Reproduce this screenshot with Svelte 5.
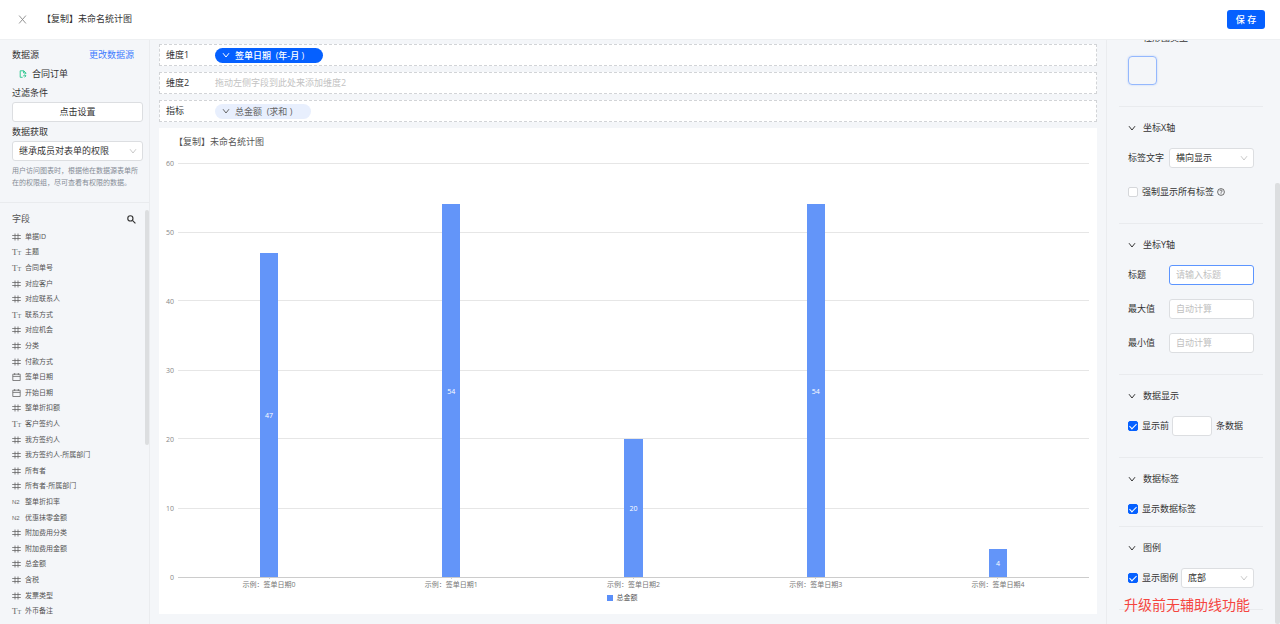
<script>
    let permission = "继承成员对表单的权限";
    let labelDirection = "横向显示";
    let legendPosition = "底部";

    let forceLabels = false;
    let limitRows = true;
    let showLabels = true;
    let showLegend = true;

    let axisTitle = "";
    let axisMax = "";
    let axisMin = "";
    let rowLimit = "";

    const fields = [
        { type: "hash", name: "单据ID" },
        { type: "text", name: "主题" },
        { type: "text", name: "合同单号" },
        { type: "hash", name: "对应客户" },
        { type: "hash", name: "对应联系人" },
        { type: "text", name: "联系方式" },
        { type: "hash", name: "对应机会" },
        { type: "hash", name: "分类" },
        { type: "hash", name: "付款方式" },
        { type: "date", name: "签单日期" },
        { type: "date", name: "开始日期" },
        { type: "hash", name: "整单折扣额" },
        { type: "text", name: "客户签约人" },
        { type: "hash", name: "我方签约人" },
        { type: "hash", name: "我方签约人-所属部门" },
        { type: "hash", name: "所有者" },
        { type: "hash", name: "所有者-所属部门" },
        { type: "number", name: "整单折扣率" },
        { type: "number", name: "优惠抹零金额" },
        { type: "hash", name: "附加费用分类" },
        { type: "hash", name: "附加费用金额" },
        { type: "hash", name: "总金额" },
        { type: "hash", name: "含税" },
        { type: "hash", name: "发票类型" },
        { type: "text", name: "外币备注" },
    ];

    const data = [
        { label: "示例：签单日期0", value: 47 },
        { label: "示例：签单日期1", value: 54 },
        { label: "示例：签单日期2", value: 20 },
        { label: "示例：签单日期3", value: 54 },
        { label: "示例：签单日期4", value: 4 },
    ];

    const max = 60;
    const ticks = [60, 50, 40, 30, 20, 10, 0];

    // everything in the plot is placed in percent so it can stretch
    const y = (v) => (1 - v / max) * 100;
    const x = (i) => ((i + 0.5) / data.length) * 100;
</script>

{#snippet chevron()}
    <svg class="chevron" viewBox="0 0 8 8" aria-hidden="true">
        <path d="M1 2.2 4 6 7 2.2" />
    </svg>
{/snippet}

{#snippet heading(title)}
    <h3>{@render chevron()}{title}</h3>
{/snippet}

<div class="app">
    <header>
        <button class="close" aria-label="关闭">
            <svg viewBox="0 0 8 8"><path d="M1 .5 7 7.5M7 .5 1 7.5" /></svg>
        </button>
        <h1>【复制】未命名统计图</h1>
        <button class="save">保 存</button>
    </header>

    <div class="body">
        <aside class="left">
            <section class="source">
                <div class="row between">
                    <span>数据源</span>
                    <a href="#source">更改数据源</a>
                </div>
                <div class="row form-name">
                    <svg viewBox="0 0 8 8" aria-hidden="true">
                        <path d="M3.6 7.3H1.2V.8H4.8L6.8 2.8V4M4.6.8V3H6.8M4.2 5.8H7M5.6 4.4 7 5.8 5.6 7.2" />
                    </svg>
                    合同订单
                </div>
                <div class="row">过滤条件</div>
                <button class="setting">点击设置</button>
                <label class="row" for="permission">数据获取</label>
                <div class="select">
                    <select id="permission" bind:value={permission}>
                        <option>继承成员对表单的权限</option>
                    </select>
                    {@render chevron()}
                </div>
                <p class="hint">
                    用户访问图表时，根据他在数据源表单所在的权限组，尽可查看有权限的数据。
                </p>
            </section>

            <section class="fields">
                <div class="fields-head">
                    <span>字段</span>
                    <button aria-label="搜索">
                        <svg viewBox="0 0 8 8">
                            <circle cx="3" cy="3" r="2.3" />
                            <path d="M4.8 4.8 7.5 7.5" />
                        </svg>
                    </button>
                </div>
                <ul>
                    {#each fields as field}
                        <li>
                            {#if field.type === "hash"}
                                <svg class="type" viewBox="0 0 9 8">
                                    <path d="M.2 2.5H8.8M.2 5.5H8.8M3 .5V7.5M6 .5V7.5" />
                                </svg>
                            {:else if field.type === "date"}
                                <svg class="type" viewBox="0 0 9 8">
                                    <path d="M.8 1.2H8.2V7.5H.8ZM.8 3.4H8.2M2.7 0V2M6.3 0V2" />
                                </svg>
                            {:else if field.type === "text"}
                                <span class="type serif">T<small>T</small></span>
                            {:else}
                                <span class="type num">N2</span>
                            {/if}
                            {field.name}
                        </li>
                    {/each}
                </ul>
            </section>
            <div class="thumb"></div>
        </aside>

        <main>
            <div class="drop">
                <span class="drop-label">维度1</span>
                <button class="pill primary">
                    {@render chevron()}签单日期&nbsp; (年-月 )
                </button>
            </div>
            <div class="drop">
                <span class="drop-label">维度2</span>
                <span class="placeholder">拖动左侧字段到此处来添加维度2</span>
            </div>
            <div class="drop">
                <span class="drop-label">指标</span>
                <button class="pill">
                    {@render chevron()}总金额&nbsp; (求和 )
                </button>
            </div>

            <section class="chart">
                <h2>【复制】未命名统计图</h2>
                <div class="plot">
                    <svg width="100%" height="100%">
                        {#each ticks as tick}
                            <line
                                class={tick === 0 ? "axis" : "grid"}
                                x1="0"
                                x2="100%"
                                y1="{y(tick)}%"
                                y2="{y(tick)}%"
                            />
                            <text class="tick" x="-4" y="{y(tick)}%" dy="3">{tick}</text>
                        {/each}
                        {#each data as d, i}
                            <rect
                                x="{x(i) - 1}%"
                                y="{y(d.value)}%"
                                width="2%"
                                height="{100 - y(d.value)}%"
                            />
                            {#if showLabels}
                                <text class="value" x="{x(i)}%" y="{y(d.value / 2)}%" dy="3"
                                    >{d.value}</text
                                >
                            {/if}
                        {/each}
                    </svg>
                </div>
                <div class="categories">
                    {#each data as d}
                        <span>{d.label}</span>
                    {/each}
                </div>
                <div class="legend">
                    {#if showLegend}
                        <i></i>总金额
                    {/if}
                </div>
            </section>
        </main>

        <aside class="right">
            <section class="group first">
                {@render heading("柱形图类型")}
                <button class="shape" aria-label="柱形图"></button>
            </section>

            <section class="group">
                {@render heading("坐标X轴")}
                <div class="item">
                    <label class="name" for="direction">标签文字</label>
                    <div class="select">
                        <select id="direction" bind:value={labelDirection}>
                            <option>横向显示</option>
                        </select>
                        {@render chevron()}
                    </div>
                </div>
                <div class="item">
                    <label>
                        <input type="checkbox" bind:checked={forceLabels} />
                        强制显示所有标签
                    </label>
                    <svg class="help" viewBox="0 0 8 8" aria-hidden="true">
                        <circle cx="4" cy="4" r="3.4" />
                        <path d="M2.9 3.2C2.9 1.7 5.1 1.7 5.1 3.1 5.1 3.9 4 3.9 4 4.8M4 5.4V6.1" />
                    </svg>
                </div>
            </section>

            <section class="group">
                {@render heading("坐标Y轴")}
                <div class="item">
                    <label class="name" for="title">标题</label>
                    <input id="title" class="active" placeholder="请输入标题" bind:value={axisTitle} />
                </div>
                <div class="item">
                    <label class="name" for="max">最大值</label>
                    <input id="max" placeholder="自动计算" bind:value={axisMax} />
                </div>
                <div class="item">
                    <label class="name" for="min">最小值</label>
                    <input id="min" placeholder="自动计算" bind:value={axisMin} />
                </div>
            </section>

            <section class="group">
                {@render heading("数据显示")}
                <div class="item">
                    <label>
                        <input type="checkbox" bind:checked={limitRows} />
                        显示前
                    </label>
                    <input class="short" aria-label="显示条数" bind:value={rowLimit} />
                    <span>条数据</span>
                </div>
            </section>

            <section class="group compact">
                {@render heading("数据标签")}
                <div class="item">
                    <label>
                        <input type="checkbox" bind:checked={showLabels} />
                        显示数据标签
                    </label>
                </div>
            </section>

            <section class="group">
                {@render heading("图例")}
                <div class="item">
                    <label>
                        <input type="checkbox" bind:checked={showLegend} />
                        显示图例
                    </label>
                    <div class="select">
                        <select aria-label="图例位置" bind:value={legendPosition}>
                            <option>底部</option>
                        </select>
                        {@render chevron()}
                    </div>
                </div>
            </section>
            <p class="note">升级前无辅助线功能</p>
            <div class="thumb"></div>
        </aside>
    </div>
</div>

<style>
    :global(body) {
        background: #f4f6f9;
    }

    .app {
        display: flex;
        flex-direction: column;
        height: 100vh;
        overflow: hidden;
        color: #333;
        font: 9px/20px "Open Sans", "Noto Sans CJK SC", sans-serif;
    }

    .app * {
        box-sizing: border-box;
    }

    h1,
    h2,
    h3,
    p,
    ul {
        margin: 0;
        padding: 0;
        font-size: inherit;
        font-weight: normal;
        list-style: none;
    }

    button,
    input,
    select {
        margin: 0;
        padding: 0;
        border: 0;
        background: none;
        color: inherit;
        font: inherit;
        cursor: pointer;
    }

    svg {
        fill: none;
        stroke: currentColor;
        stroke-width: 1;
        flex: none;
    }

    a {
        color: #3c7bff;
        text-decoration: none;
    }

    header {
        display: flex;
        align-items: center;
        flex: none;
        height: 40px;
        padding: 0 15px 1px 18px;
        background: #fff;
        border-bottom: 1px solid #eef0f2;
    }

    .close {
        display: flex;
        width: 9px;
        margin-right: 15px;
        color: #888;
    }

    .close svg {
        width: 9px;
        height: 9px;
        stroke-width: 0.8;
    }

    .save {
        width: 38px;
        height: 19px;
        margin-left: auto;
        border-radius: 3px;
        background: #0560ff;
        color: #fff;
        font-weight: 500;
        line-height: 19px;
    }

    .body {
        display: flex;
        flex: 1;
        min-height: 0;
    }

    .chevron {
        width: 8px;
        height: 8px;
    }

    /* left column */

    .left {
        position: relative;
        display: flex;
        flex-direction: column;
        flex: none;
        width: 150px;
        border-right: 1px solid #eaecef;
    }

    .source {
        padding: 5px 6px 13px 12px;
        border-bottom: 1px solid #e9ebee;
    }

    .row {
        display: flex;
        align-items: center;
        height: 19px;
    }

    .between {
        justify-content: space-between;
        padding-right: 9px;
    }

    .form-name {
        gap: 5px;
        padding-left: 7px;
    }

    .form-name svg {
        width: 8px;
        height: 8px;
        color: #36c993;
    }

    .setting,
    .select select,
    .item input:not([type="checkbox"]) {
        height: 20px;
        border: 1px solid #dcdee1;
        border-radius: 3px;
        background: #fff;
    }

    .setting {
        display: block;
        width: 131px;
        line-height: 18px;
    }

    .select {
        display: grid;
        align-items: center;
    }

    .select > :global(*) {
        grid-area: 1 / 1;
    }

    .select select {
        appearance: none;
        width: 100%;
        padding: 0 6px;
        line-height: 18px;
    }

    .select .chevron {
        justify-self: end;
        margin-right: 6px;
        color: #bbb;
        stroke-width: 0.8;
        pointer-events: none;
    }

    .source .select {
        width: 131px;
    }

    .hint {
        padding-top: 4px;
        color: #858c96;
        font-size: 7px;
        line-height: 12px;
    }

    .fields {
        display: flex;
        flex-direction: column;
        flex: 1;
        min-height: 0;
        padding: 6px 13px 5px 12px;
        color: #555;
    }

    .fields-head {
        display: flex;
        align-items: center;
        justify-content: space-between;
        height: 20px;
    }

    .fields-head button {
        display: flex;
        color: #333;
    }

    .fields-head svg {
        width: 9px;
        height: 9px;
    }

    .fields ul {
        display: grid;
        flex: 1;
        grid-auto-rows: 1fr;
        min-height: 0;
        font-size: 7px;
        line-height: 12px;
    }

    .fields li {
        display: flex;
        align-items: center;
        gap: 4px;
        min-height: 0;
    }

    .type {
        width: 9px;
        height: 8px;
        flex: none;
        color: #666;
        stroke-width: 0.8;
    }

    .serif {
        font: 9px/8px "Liberation Serif", serif;
        white-space: nowrap;
    }

    .serif small {
        font-size: 6px;
    }

    .num {
        font: 6px/8px "Liberation Sans", sans-serif;
    }

    .thumb {
        position: absolute;
        top: 170px;
        right: 0;
        width: 4px;
        height: 235px;
        border-radius: 2px;
        background: #dcdee0;
    }

    /* middle column */

    main {
        display: flex;
        flex-direction: column;
        flex: 1;
        gap: 6px;
        min-width: 0;
        padding: 4px 9px 10px;
    }

    .drop {
        display: flex;
        align-items: center;
        flex: none;
        height: 22px;
        padding: 0 6px;
        border: 1px dashed #d2d4d7;
        background: #fff;
    }

    .drop-label {
        width: 49px;
    }

    .placeholder {
        color: #c3c3c3;
    }

    .pill {
        display: flex;
        align-items: center;
        gap: 5px;
        height: 15px;
        padding: 0 19px 0 7px;
        border-radius: 8px;
        background: #e8effd;
        color: #666;
        line-height: 15px;
    }

    .primary {
        background: #0560ff;
        color: #fff;
        font-weight: 500;
    }

    .chart {
        display: flex;
        flex-direction: column;
        flex: 1;
        min-height: 0;
        padding: 4px 8px 10px 0;
        background: #fff;
    }

    .chart h2 {
        height: 31px;
        padding-left: 15px;
        color: #555;
    }

    .plot {
        flex: 1;
        min-height: 0;
        padding-left: 19px;
    }

    .plot svg {
        display: block;
        overflow: visible;
        shape-rendering: crispEdges;
    }

    .grid {
        stroke: #e6e6e6;
    }

    .axis {
        stroke: #ccc;
    }

    .plot rect {
        fill: #6395f9;
        stroke: none;
    }

    .plot text {
        stroke: none;
        font-size: 7px;
    }

    .tick {
        fill: #888;
        text-anchor: end;
    }

    .value {
        fill: #fff;
        text-anchor: middle;
    }

    .categories {
        display: flex;
        padding-left: 19px;
        color: #777;
        font-size: 7px;
        line-height: 12px;
    }

    .categories span {
        display: grid;
        flex: 1;
        justify-items: center;
    }

    .categories span::before {
        content: "";
        width: 1px;
        height: 2px;
        background: #ccc;
    }

    .legend {
        display: flex;
        align-items: center;
        justify-content: center;
        gap: 4px;
        height: 13px;
        padding-right: 4px;
        color: #555;
        font-size: 7px;
        line-height: 13px;
    }

    .legend i {
        width: 6px;
        height: 6px;
        background: #5b8ff9;
    }

    /* right column */

    .right {
        position: relative;
        flex: none;
        width: 174px;
        overflow: hidden;
        border-left: 1px solid #eaecef;
    }

    .group {
        margin: 0 17px 0 12px;
        padding: 11px 9px 21px;
        border-bottom: 1px solid #e9ebee;
    }

    .first {
        margin-top: -12px;
        padding-top: 0;
    }

    .compact {
        padding-bottom: 7px;
    }

    h3 {
        display: flex;
        align-items: center;
        gap: 7px;
        height: 20px;
    }

    .shape {
        display: block;
        width: 29px;
        height: 29px;
        margin-top: 8px;
        border: 1px solid #94b8fd;
        border-radius: 4px;
        box-shadow: 0 0 2px #b5cdfb;
    }

    .item {
        display: flex;
        align-items: center;
        height: 20px;
        margin-top: 14px;
        white-space: nowrap;
    }

    h3 + .item {
        margin-top: 10px;
    }

    .item .name {
        flex: none;
        width: 41px;
    }

    .item label:not(.name) {
        display: flex;
        align-items: center;
        gap: 4px;
        padding-right: 3px;
    }

    .item .select {
        flex: 1;
        min-width: 0;
    }

    .item input:not([type="checkbox"]) {
        flex: 1;
        min-width: 0;
        padding: 0 6px;
        cursor: text;
    }

    .item input::placeholder {
        color: #c0c0c0;
    }

    .item input.active {
        border-color: #5c95ff;
    }

    .item input.short {
        flex: none;
        width: 40px;
        margin-right: 4px;
    }

    input[type="checkbox"] {
        display: grid;
        place-content: center;
        appearance: none;
        width: 10px;
        height: 10px;
        border: 1px solid #d5d7da;
        border-radius: 2px;
        background: #fff;
    }

    input[type="checkbox"]:checked {
        border-color: #0560ff;
        background: #0560ff;
    }

    input[type="checkbox"]:checked::after {
        content: "";
        width: 3px;
        height: 6px;
        margin-bottom: 1px;
        border: solid #fff;
        border-width: 0 1px 1px 0;
        transform: rotate(45deg);
    }

    .help {
        width: 8px;
        height: 8px;
        stroke-width: 0.7;
    }

    .note {
        position: absolute;
        bottom: 9px;
        left: 17px;
        color: #f5453f;
        font-size: 14px;
        line-height: 20px;
    }

    .right .thumb {
        top: 143px;
        bottom: 0;
        width: 5px;
        height: auto;
    }
</style>
